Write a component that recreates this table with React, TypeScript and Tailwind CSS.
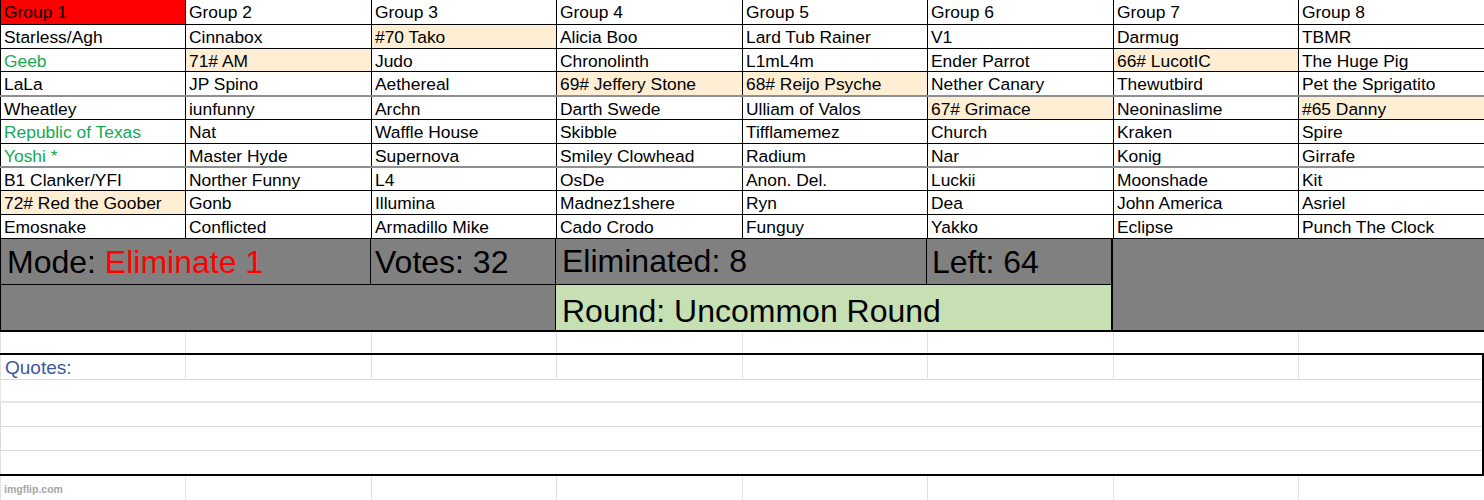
import React from "react";

type Cell = { t: string; hl?: boolean; green?: boolean; red?: boolean };

const c = (t: string, o: Partial<Cell> = {}): Cell => ({ t, ...o });

const rows: Cell[][] = [
  [c("Group 1", { red: true }), c("Group 2"), c("Group 3"), c("Group 4"), c("Group 5"), c("Group 6"), c("Group 7"), c("Group 8")],
  [c("Starless/Agh"), c("Cinnabox"), c("#70 Tako", { hl: true }), c("Alicia Boo"), c("Lard Tub Rainer"), c("V1"), c("Darmug"), c("TBMR")],
  [c("Geeb", { green: true }), c("71# AM", { hl: true }), c("Judo"), c("Chronolinth"), c("L1mL4m"), c("Ender Parrot"), c("66# LucotIC", { hl: true }), c("The Huge Pig")],
  [c("LaLa"), c("JP Spino"), c("Aethereal"), c("69# Jeffery Stone", { hl: true }), c("68# Reijo Psyche", { hl: true }), c("Nether Canary"), c("Thewutbird"), c("Pet the Sprigatito")],
  [c("Wheatley"), c("iunfunny"), c("Archn"), c("Darth Swede"), c("Ulliam of Valos"), c("67# Grimace", { hl: true }), c("Neoninaslime"), c("#65 Danny", { hl: true })],
  [c("Republic of Texas", { green: true }), c("Nat"), c("Waffle House"), c("Skibble"), c("Tifflamemez"), c("Church"), c("Kraken"), c("Spire")],
  [c("Yoshi *", { green: true }), c("Master Hyde"), c("Supernova"), c("Smiley Clowhead"), c("Radium"), c("Nar"), c("Konig"), c("Girrafe")],
  [c("B1 Clanker/YFI"), c("Norther Funny"), c("L4"), c("OsDe"), c("Anon. Del."), c("Luckii"), c("Moonshade"), c("Kit")],
  [c("72# Red the Goober", { hl: true }), c("Gonb"), c("Illumina"), c("Madnez1shere"), c("Ryn"), c("Dea"), c("John America"), c("Asriel")],
  [c("Emosnake"), c("Conflicted"), c("Armadillo Mike"), c("Cado Crodo"), c("Funguy"), c("Yakko"), c("Eclipse"), c("Punch The Clock")],
];

// row class: height + top border
const rowClass = [
  "h-[24px]",
  "h-[24px] border-t border-black",
  "h-[23px] border-t border-black",
  "h-[24px] border-t border-black",
  "h-[24px] border-t-2 border-[#8f8f8f]",
  "h-[24px] border-t border-black",
  "h-[23px] border-t border-black",
  "h-[24px] border-t-2 border-[#8f8f8f]",
  "h-[24px] border-t border-black",
  "h-[24px] border-t border-black",
];

const GRID = "grid grid-cols-[185px_186px_185px_186px_185px_186px_185px_186px]";

function LightRow({ h, children }: { h: string; children?: React.ReactNode }) {
  return (
    <div className={`${GRID} ${h}`}>
      {Array.from({ length: 8 }).map((_, i) => (
        <div key={i} className="border-l border-[#e2e2e2] overflow-hidden whitespace-nowrap">
          {i === 0 ? children : null}
        </div>
      ))}
    </div>
  );
}

export default function App() {
  return (
    <div
      className="w-[1484px] h-[500px] bg-white overflow-hidden text-black"
      style={{ fontFamily: '"Liberation Sans", Arial, sans-serif' }}
    >
      {/* main table */}
      <div className="flex flex-col">
        {rows.map((r, ri) => (
          <div key={ri} className={`${GRID} box-border ${rowClass[ri]}`}>
            {r.map((cell, ci) => (
              <div
                key={ci}
                className={`border-l border-black pl-[3px] pt-[1px] text-[17.4px] leading-[23px] whitespace-nowrap overflow-hidden ${
                  cell.red ? "bg-[#ff0000]" : cell.hl ? "bg-[#fdeed4]" : ""
                } ${cell.green ? "text-[#16a94f]" : "text-black"}`}
              >
                {cell.t}
              </div>
            ))}
          </div>
        ))}
      </div>

      {/* stats block */}
      <div className={`${GRID} grid-rows-[46px_45px] border-t border-b-2 border-black`}>
        <div className="col-span-2 bg-[#808080] border-l border-r border-b border-black pl-[6px] text-[32px] leading-[46px] whitespace-nowrap">
          Mode: <span className="text-[#ff0000]">Eliminate 1</span>
        </div>
        <div className="bg-[#808080] border-r border-b border-black pl-[4px] text-[32px] leading-[46px] whitespace-nowrap">
          Votes: 32
        </div>
        <div className="col-span-2 bg-[#808080] border-r border-b border-black pl-[6px] text-[32px] leading-[45px] whitespace-nowrap">
          Eliminated: 8
        </div>
        <div className="bg-[#808080] border-r-2 border-b border-black pl-[5px] text-[32px] leading-[46px] whitespace-nowrap">
          Left: 64
        </div>
        <div className="col-span-2 row-span-2 bg-[#808080]" />
        <div className="col-span-3 bg-[#808080] border-l border-r border-black" />
        <div className="col-span-3 bg-[#c6e0b4] border-r-2 border-black pl-[6px] pt-[4px] text-[32px] leading-[44px] whitespace-nowrap">
          Round: Uncommon Round
        </div>
      </div>

      {/* empty row */}
      <LightRow h="h-[21px]" />

      {/* quotes box */}
      <div className="border-t-2 border-b-2 border-r-2 border-black">
        <div className={`${GRID} h-[25px] border-b border-[#d9d9d9]`}>
          {Array.from({ length: 8 }).map((_, i) => (
            <div
              key={i}
              className={`border-l border-[#e2e2e2] ${i === 0 ? "pl-[4px] pt-[1px] text-[19px] leading-[24px] text-[#3a5a9c] whitespace-nowrap" : ""}`}
            >
              {i === 0 ? "Quotes:" : null}
            </div>
          ))}
        </div>
        <div className="h-[23px] border-l border-b-2 border-[#e6e6e6]" />
        <div className="h-[24px] border-l border-b border-[#d9d9d9]" />
        <div className="h-[24px] border-l border-b border-[#d9d9d9]" />
        <div className="h-[23px] border-l border-[#e2e2e2]" />
      </div>

      {/* last row */}
      <LightRow h="h-[24px]">
        <span className="pl-[3px] text-[10.5px] leading-[26px] font-semibold text-[#a6a6a6]">imgflip.com</span>
      </LightRow>
    </div>
  );
}
